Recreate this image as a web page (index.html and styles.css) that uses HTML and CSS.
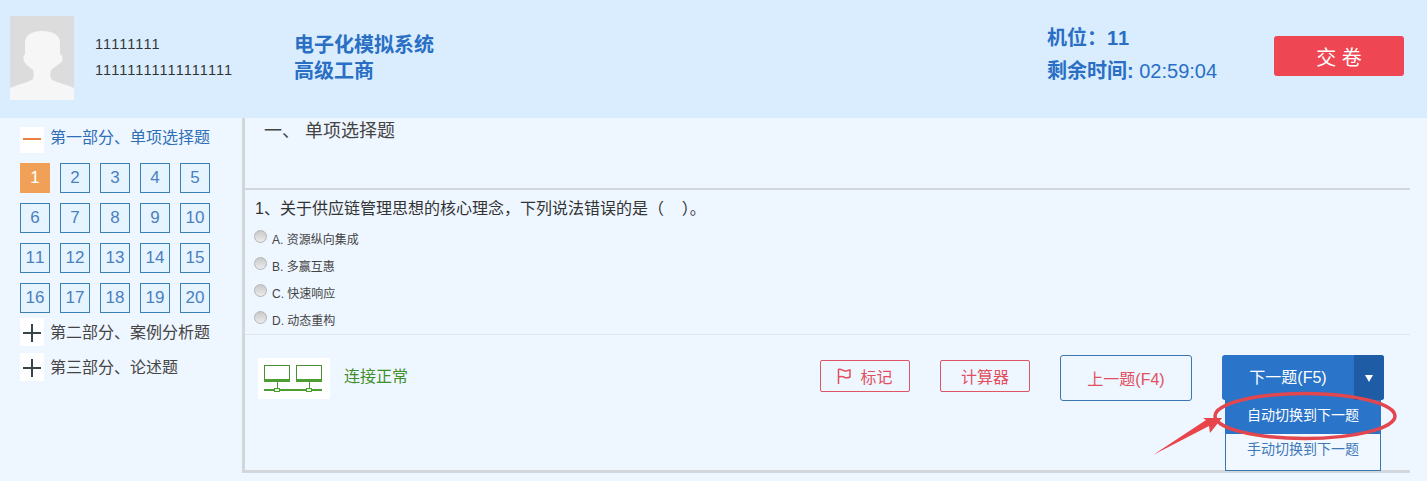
FILE: index.html
```html
<!DOCTYPE html>
<html lang="zh">
<head>
<meta charset="utf-8">
<title>电子化模拟系统</title>
<link rel="stylesheet" href="styles.css">
</head>
<body>
<header class="top">
  <svg class="avatar" width="64" height="84" viewBox="0 0 64 84">
    <rect width="64" height="84" fill="#dcdcdc"/>
    <path d="M0 84V72C8 68 18 67 23 63C24 60 24 57 23 54C19 51 15 48 14 45C13 43 13 40 15 38V27C15 19 22 15 32 15C43 15 50 19 50 27V38C53 40 53 43 52 45C50 48 44 51 41 54C40 57 40 60 41 63C46 67 56 68 64 72V84Z" fill="#f6f6f6"/>
  </svg>
  <div class="user">
    <div>11111111</div>
    <div>11111111111111111</div>
  </div>
  <div class="system">
    <div>电子化模拟系统</div>
    <div>高级工商</div>
  </div>
  <div class="status">
    <div>机位：11</div>
    <div>剩余时间: <span class="time">02:59:04</span></div>
  </div>
  <button class="submit">交 卷</button>
</header>
<main class="body">
  <aside class="side">
    <div class="part active part-first"><span class="toggle minus"></span>第一部分、单项选择题</div>
    <div class="grid">
      <a class="num current">1</a><a class="num">2</a><a class="num">3</a><a class="num">4</a><a class="num">5</a>
      <a class="num">6</a><a class="num">7</a><a class="num">8</a><a class="num">9</a><a class="num">10</a>
      <a class="num">11</a><a class="num">12</a><a class="num">13</a><a class="num">14</a><a class="num">15</a>
      <a class="num">16</a><a class="num">17</a><a class="num">18</a><a class="num">19</a><a class="num">20</a>
    </div>
    <div class="part"><span class="toggle plus"></span>第二部分、案例分析题</div>
    <div class="part"><span class="toggle plus"></span>第三部分、论述题</div>
  </aside>
  <section class="content">
    <h2 class="section-title">一、 单项选择题</h2>
    <div class="question">
      <p class="stem">1、关于供应链管理思想的核心理念，下列说法错误的是（&nbsp;&nbsp;&nbsp;&nbsp;）。</p>
      <label class="opt"><span class="radio"></span>A. 资源纵向集成</label>
      <label class="opt"><span class="radio"></span>B. 多赢互惠</label>
      <label class="opt"><span class="radio"></span>C. 快速响应</label>
      <label class="opt"><span class="radio"></span>D. 动态重构</label>
    </div>
    <div class="actions">
      <div class="net-icon">
        <svg width="72" height="41" viewBox="0 0 72 41">
          <rect x="6.500" y="7.500" width="25" height="16" fill="none" stroke="#4a8f36"/>
          <rect x="6" y="21" width="26" height="3" fill="#4c9e30"/>
          <rect x="38.500" y="7.500" width="25" height="16" fill="none" stroke="#4a8f36"/>
          <rect x="38" y="21" width="26" height="3" fill="#4c9e30"/>
          <path d="M19.500 24V31M51.500 24V31" stroke="#4a8f36"/>
          <rect x="6" y="31" width="58" height="2" fill="#4c9e30"/>
          <rect x="16.500" y="30.500" width="5" height="3" fill="#e6f2d8" stroke="#4c9e30"/>
          <rect x="48.500" y="30.500" width="5" height="3" fill="#e6f2d8" stroke="#4c9e30"/>
        </svg>
      </div>
      <span class="net-text">连接正常</span>
      <button class="btn-red mark">
        <svg width="14" height="16" viewBox="0 0 14 16"><path d="M1.500 16V1.500C4 .5 6 3 8 3C10 3 11.500 2 13 2V9C11 10 9.500 10 8 9.500C6 8.500 4 8 1.500 9" fill="none" stroke="#e2505f" stroke-width="1.500"/></svg>
        标记
      </button>
      <button class="btn-red calc">计算器</button>
      <button class="prev">上一题(F4)</button>
      <div class="next-wrap">
        <div class="next">
          <span class="next-label">下一题(F5)</span>
          <span class="next-caret"></span>
        </div>
        <div class="menu">
          <div class="menu-item on">自动切换到下一题</div>
          <div class="menu-item off">手动切换到下一题</div>
        </div>
      </div>
    </div>
  </section>
</main>
<svg class="annotation" width="250" height="70" viewBox="0 0 250 70">
  <ellipse cx="155" cy="25" rx="90" ry="22.500" fill="none" stroke="#e2474f" stroke-width="3.500"/>
  <path d="M3 64L56 29L53 27L72 27L60 42L59 35Z" fill="#e8444c"/>
</svg>
</body>
</html>
```
FILE: styles.css
```css
* { box-sizing: border-box; }
html, body { margin: 0; padding: 0; }
body {
  width: 1427px;
  height: 481px;
  overflow: hidden;
  position: relative;
  background: #eef6ff;
  font-family: "Liberation Sans", "Noto Sans CJK SC", sans-serif;
  font-kerning: none;
  color: #333;
}
.top {
  height: 118px;
  background: #d9edff;
  display: flex;
  align-items: flex-start;
  padding: 16px 23px 0 10px;
}
.avatar { flex: none; display: block; }
.user {
  margin: 15px 0 0 21px;
  width: 199px;
  font-size: 14.500px;
  line-height: 26px;
  color: #333;
}
.system {
  font-size: 20px;
  line-height: 26px;
  font-weight: 700;
  color: #2a6fc4;
  margin-top: 16px;
  width: 753px;
}
.status {
  font-size: 20px;
  line-height: 33px;
  font-weight: 700;
  color: #2a6fc4;
  margin-top: 6px;
  width: 227px;
}
.time { font-weight: 400; }
.submit {
  width: 130px;
  height: 40px;
  margin-top: 20px;
  border: 0;
  border-radius: 3px;
  background: #ef4654;
  color: #fff;
  font: 20px "Liberation Sans", "Noto Sans CJK SC", sans-serif;
}
.body { display: flex; align-items: flex-start; }
.side { width: 242px; flex: none; padding: 9px 0 0 20px; }
.part {
  display: flex;
  align-items: flex-start;
  height: 35px;
  font-size: 16px;
  line-height: 29px;
  color: #444;
}
.part-first { height: 27px; margin-bottom: 9px; line-height: 22px; }
.active { color: #2f6fb5; }
.toggle {
  width: 24px;
  height: 28px;
  background: #fff;
  margin-right: 6px;
  position: relative;
  flex: none;
}
.part-first .toggle { height: 26px; }
.minus::before, .plus::before {
  content: "";
  position: absolute;
  left: 3px;
  right: 3px;
  top: 14px;
  height: 2px;
  background: #37444c;
}
.minus::before { top: 11px; background: #e8803f; }
.plus::after {
  content: "";
  position: absolute;
  left: 11px;
  top: 6px;
  bottom: 4px;
  width: 2px;
  background: #37444c;
}
.grid {
  display: grid;
  grid-template-columns: repeat(5, 30px);
  grid-auto-rows: 30px;
  gap: 10px;
  margin-bottom: 5px;
}
.num {
  display: flex;
  align-items: center;
  justify-content: center;
  border: 1px solid #3a80b5;
  font-size: 17px;
  color: #4a80bd;
  background: #e6f4ff;
}
.current { background: #f0a057; border-color: #f0a057; color: #fff; }
.content {
  flex: none;
  width: 1168px;
  height: 355px;
  border-left: 3px solid #d3d6da;
  border-bottom: 3px solid #d3d6da;
  margin-right: 17px;
}
.section-title {
  margin: 0;
  height: 72px;
  padding: 0 0 0 19px;
  border-bottom: 2px solid #d3d6da;
  font-size: 18px;
  font-weight: 400;
  line-height: 26px;
  color: #444;
}
.question { height: 145px; padding-top: 7px; border-bottom: 1px solid #dfe5ea; }
.stem {
  margin: 0 0 4px 10px;
  font-size: 16px;
  line-height: 24px;
  color: #333;
}
.opt {
  display: flex;
  align-items: center;
  height: 27px;
  font-size: 12px;
  color: #444;
  padding-left: 9px;
}
.radio {
  width: 13px;
  height: 13px;
  border-radius: 50%;
  border: 1px solid #b5b5b5;
  background: linear-gradient(#c9c9c9, #ececec);
  margin: -5px 5px 0 0;
  flex: none;
}
.actions { display: flex; align-items: flex-start; padding: 20px 0 0 13px; }
.net-icon { width: 72px; height: 41px; margin-top: 3px; background: #fff; }
.net-icon svg { display: block; }
.net-text { font-size: 16px; line-height: 44px; color: #3f8f2c; margin-left: 14px; width: 476px; }
.btn-red {
  height: 32px;
  width: 90px;
  margin-top: 5px;
  margin-right: 30px;
  border: 1px solid #e05566;
  border-radius: 2px;
  background: transparent;
  color: #e2505f;
  font: 16px "Liberation Sans", "Noto Sans CJK SC", sans-serif;
  display: flex;
  align-items: center;
  justify-content: center;
  gap: 9px;
}
.prev {
  width: 132px;
  height: 46px;
  margin-right: 30px;
  border: 1px solid #3a76b0;
  border-radius: 3px;
  background: transparent;
  color: #e2505f;
  font: 16px "Liberation Sans", "Noto Sans CJK SC", sans-serif;
}
.next-wrap { position: relative; width: 162px; }
.next {
  display: flex;
  height: 45px;
  border-radius: 3px;
  overflow: hidden;
  background: #2a74c9;
  color: #fff;
  font-size: 16px;
}
.next-label { flex: 1; text-align: center; line-height: 45px; }
.next-caret { width: 30px; background: #1f5ca6; position: relative; }
.next-caret::after {
  content: "";
  position: absolute;
  left: 11px;
  top: 20px;
  border: 4px solid transparent;
  border-top: 7px solid #fff;
  border-bottom: 0;
}
.menu {
  position: absolute;
  left: 3px;
  top: 45px;
  width: 156px;
  background: #f2f8ff;
  border: 1px solid #3a76b0;
  border-top: 0;
}
.menu-item {
  font-size: 14px;
  text-align: center;
  color: #3f78b8;
}
.off { height: 36px; line-height: 30px; }
.on { background: #2a74c9; color: #fff; height: 34px; line-height: 31px; margin: 0 -1px; }
.annotation {
  position: absolute;
  left: 1150px;
  top: 391px;
}
```
